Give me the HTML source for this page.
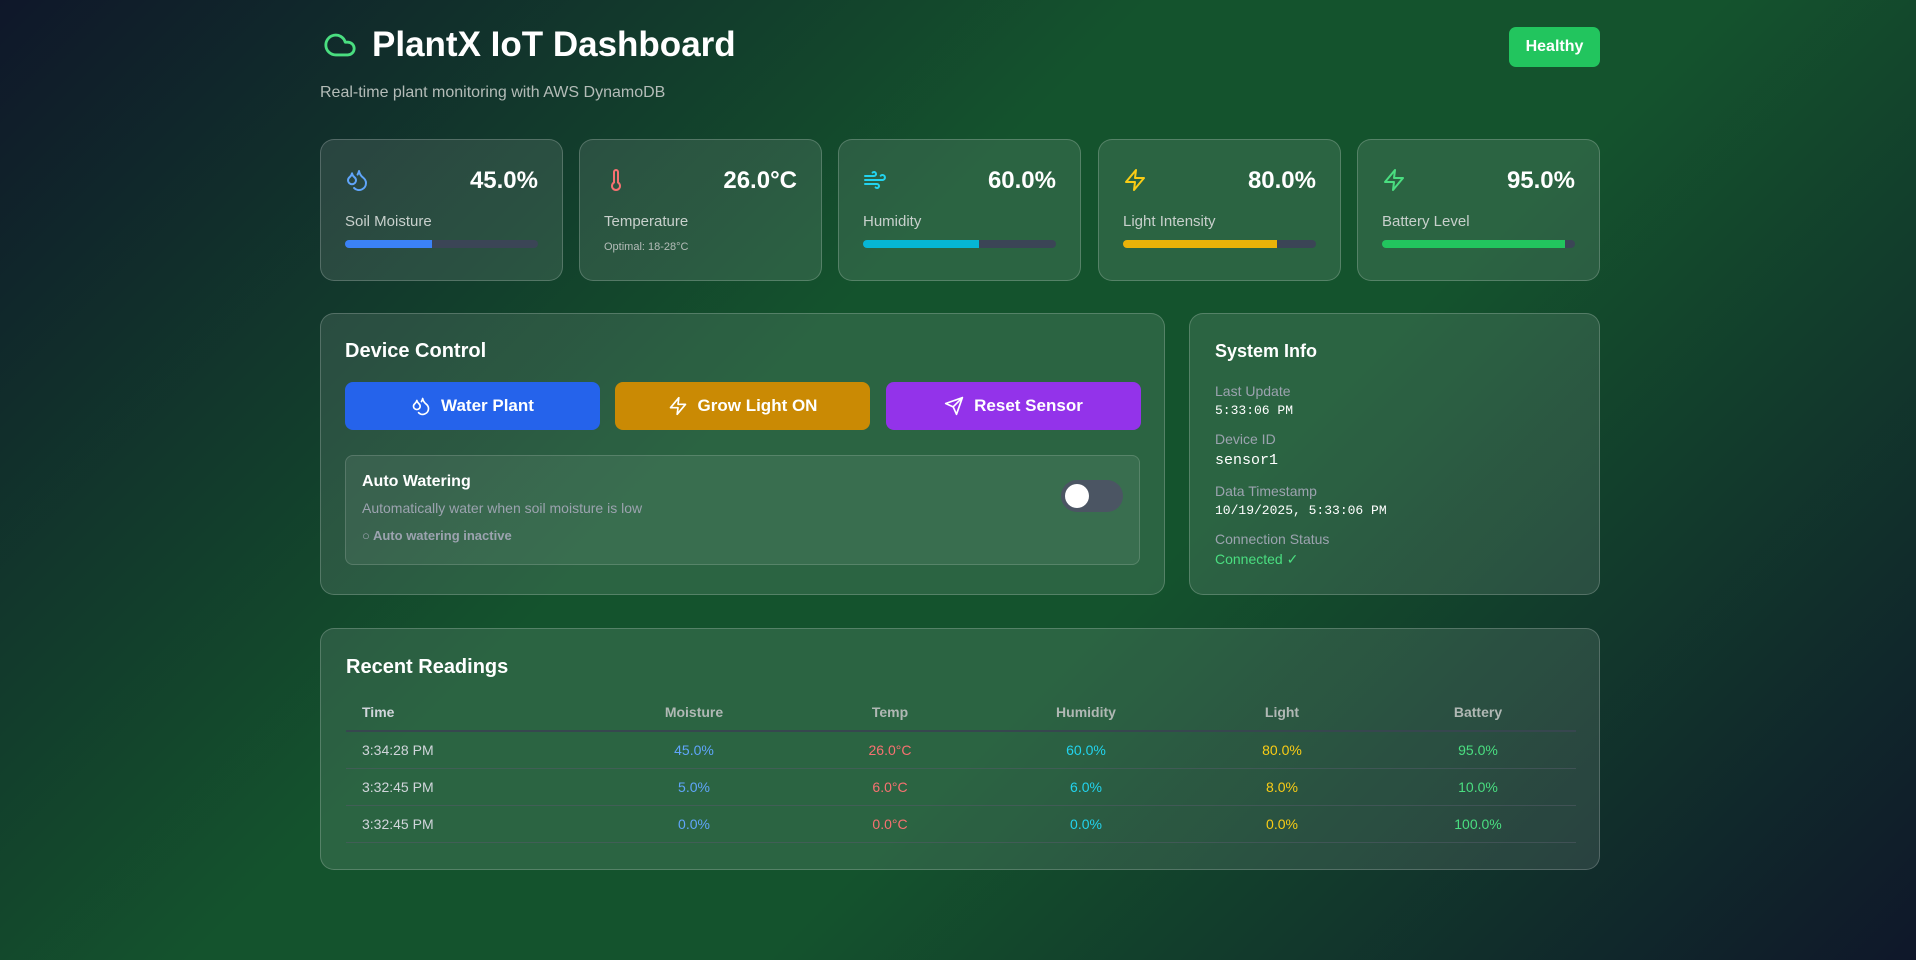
<!DOCTYPE html>
<html><head><meta charset="utf-8"><style>
*{box-sizing:border-box;margin:0;padding:0}
body{width:1916px;height:960px;overflow:hidden;font-family:"Liberation Sans",sans-serif;color:#fff;
background:linear-gradient(135deg,#0f172a 0%,#14532d 40%,#14532d 60%,#0f172a 100%);position:relative}
.a{position:absolute}
.card{position:absolute;border:1px solid rgba(255,255,255,0.2);border-radius:14px;background:rgba(255,255,255,0.1)}
.mc{top:139px;width:243px;height:142px}
.mc svg{position:absolute;left:24px;top:28px}
.mc .v{position:absolute;right:24px;top:27px;font-size:24px;font-weight:bold}
.mc .l{position:absolute;left:24px;top:73px;font-size:15px;color:#c8d0cc}
.bar{position:absolute;left:24px;right:24px;top:100px;height:8px;border-radius:4px;background:#3b4556;overflow:hidden}
.bar i{display:block;height:100%}
h2{font-size:20px;font-weight:bold;position:absolute}
.btn{position:absolute;top:382px;height:48px;width:255px;border-radius:8px;font-size:17px;font-weight:bold;display:flex;align-items:center;justify-content:center;gap:10px}
.lab{position:absolute;left:25px;font-size:14px;color:#9ca3af}
.val{position:absolute;left:25px;font-family:"Liberation Mono",monospace;font-size:13px;color:#fff}
table{position:absolute;left:25px;top:64px;width:1230px;border-collapse:collapse;font-size:14px;table-layout:fixed}
th{color:#b0b8b4;font-weight:bold;height:38px;border-bottom:2px solid #37474f;font-size:14px}
td{height:37px;border-bottom:1px solid rgba(80,90,100,0.6);text-align:center}
th:first-child,td:first-child{text-align:left;padding-left:16px;color:#d1d5db}
.c1{color:#60a5fa}.c2{color:#f87171}.c3{color:#22d3ee}.c4{color:#facc15}.c5{color:#4ade80}
</style></head><body>
<svg class="a" style="left:321px;top:28px" width="38" height="34" viewBox="0 0 24 24" fill="none" stroke="#4ade80" stroke-width="2" stroke-linecap="round" stroke-linejoin="round"><path d="M17.5 19H9a7 7 0 1 1 6.71-9h1.79a4.5 4.5 0 1 1 0 9Z"/></svg>
<div class="a" style="left:372px;top:25px;font-size:35px;font-weight:bold">PlantX IoT Dashboard</div>
<div class="a" style="left:320px;top:84px;font-size:16px;color:#b4bcb8">Real-time plant monitoring with AWS DynamoDB</div>
<div class="a" style="left:1509px;top:27px;width:91px;height:40px;border-radius:7px;background:#22c55e;font-size:16px;font-weight:bold;display:flex;align-items:center;justify-content:center">Healthy</div>

<div class="card mc" style="left:320px"><svg width="24" height="24" viewBox="0 0 24 24" fill="none" stroke="#60a5fa" stroke-width="2" stroke-linecap="round" stroke-linejoin="round"><path d="M7 16.3c2.2 0 4-1.830 4-4.05 0-1.16-.57-2.26-1.71-3.19S7.29 6.75 7 5.3c-.29 1.45-1.14 2.84-2.29 3.76S3 11.1 3 12.25c0 2.22 1.8 4.05 4 4.05z"/><path d="M12.56 6.6A10.97 10.97 0 0 0 14 3.02c.5 2.5 2 4.9 4 6.5s3 3.5 3 5.5a6.98 6.98 0 0 1-11.91 4.97"/></svg><div class="v">45.0%</div><div class="l">Soil Moisture</div><div class="bar"><i style="width:45%;background:#3b82f6"></i></div></div>
<div class="card mc" style="left:579px"><svg width="24" height="24" viewBox="0 0 24 24" fill="none" stroke="#f87171" stroke-width="2" stroke-linecap="round" stroke-linejoin="round"><path d="M14 4v10.54a4 4 0 1 1-4 0V4a2 2 0 0 1 4 0Z"/></svg><div class="v">26.0°C</div><div class="l">Temperature</div><div class="a" style="left:24px;top:101px;font-size:11px;color:#b4bcb8">Optimal: 18-28°C</div></div>
<div class="card mc" style="left:838px"><svg width="24" height="24" viewBox="0 0 24 24" fill="none" stroke="#22d3ee" stroke-width="2" stroke-linecap="round" stroke-linejoin="round"><path d="M17.7 7.7a2.5 2.5 0 1 1 1.8 4.3H2"/><path d="M9.6 4.6A2 2 0 1 1 11 8H2"/><path d="M12.6 19.4A2 2 0 1 0 14 16H2"/></svg><div class="v">60.0%</div><div class="l">Humidity</div><div class="bar"><i style="width:60%;background:#06b6d4"></i></div></div>
<div class="card mc" style="left:1098px"><svg width="24" height="24" viewBox="0 0 24 24" fill="none" stroke="#facc15" stroke-width="2" stroke-linecap="round" stroke-linejoin="round"><path d="M13 2 3 14h9l-1 8 10-12h-9l1-8z"/></svg><div class="v">80.0%</div><div class="l">Light Intensity</div><div class="bar"><i style="width:80%;background:#eab308"></i></div></div>
<div class="card mc" style="left:1357px"><svg width="24" height="24" viewBox="0 0 24 24" fill="none" stroke="#4ade80" stroke-width="2" stroke-linecap="round" stroke-linejoin="round"><path d="M13 2 3 14h9l-1 8 10-12h-9l1-8z"/></svg><div class="v">95.0%</div><div class="l">Battery Level</div><div class="bar"><i style="width:95%;background:#22c55e"></i></div></div>

<div class="card" style="left:320px;top:313px;width:845px;height:282px"></div>
<h2 style="left:345px;top:340px">Device Control</h2>
<div class="btn" style="left:345px;background:#2563eb"><svg width="20" height="20" viewBox="0 0 24 24" fill="none" stroke="#fff" stroke-width="2" stroke-linecap="round" stroke-linejoin="round"><path d="M7 16.3c2.2 0 4-1.83 4-4.05 0-1.16-.57-2.26-1.71-3.19S7.29 6.75 7 5.3c-.29 1.45-1.14 2.84-2.29 3.76S3 11.1 3 12.25c0 2.22 1.8 4.05 4 4.05z"/><path d="M12.56 6.6A10.970 10.97 0 0 0 14 3.02c.5 2.5 2 4.9 4 6.5s3 3.5 3 5.5a6.98 6.98 0 0 1-11.91 4.97"/></svg>Water Plant</div>
<div class="btn" style="left:615px;background:#ca8a04"><svg width="20" height="20" viewBox="0 0 24 24" fill="none" stroke="#fff" stroke-width="2" stroke-linecap="round" stroke-linejoin="round"><path d="M13 2 3 14h9l-1 8 10-12h-9l1-8z"/></svg>Grow Light ON</div>
<div class="btn" style="left:886px;background:#9333ea"><svg width="20" height="20" viewBox="0 0 24 24" fill="none" stroke="#fff" stroke-width="2" stroke-linecap="round" stroke-linejoin="round"><path d="m22 2-7 20-4-9-9-4Z"/><path d="M22 2 11 13"/></svg>Reset Sensor</div>
<div class="card" style="left:345px;top:455px;width:795px;height:110px;border-radius:8px;background:rgba(255,255,255,0.07);border-color:rgba(255,255,255,0.15)">
 <div class="a" style="left:16px;top:17px;font-size:16px;font-weight:bold">Auto Watering</div>
 <div class="a" style="left:16px;top:44px;font-size:14px;color:#9ca3af">Automatically water when soil moisture is low</div>
 <div class="a" style="left:16px;top:72px;font-size:13px;font-weight:bold;color:#9ca3af">○ Auto watering inactive</div>
 <div class="a" style="left:715px;top:24px;width:62px;height:32px;border-radius:16px;background:#4b5563"><div class="a" style="left:4px;top:4px;width:24px;height:24px;border-radius:50%;background:#fff"></div></div>
</div>

<div class="card" style="left:1189px;top:313px;width:411px;height:282px">
 <h2 style="left:25px;top:27px;font-size:18px">System Info</h2>
 <div class="lab" style="top:69px">Last Update</div><div class="val" style="top:89px">5:33:06 PM</div>
 <div class="lab" style="top:117px">Device ID</div><div class="val" style="top:138px;font-size:15px">sensor1</div>
 <div class="lab" style="top:169px">Data Timestamp</div><div class="val" style="top:189px">10/19/2025, 5:33:06 PM</div>
 <div class="lab" style="top:217px">Connection Status</div><div class="a" style="left:25px;top:237px;font-size:14px;color:#4ade80">Connected ✓</div>
</div>

<div class="card" style="left:320px;top:628px;width:1280px;height:242px">
 <h2 style="left:25px;top:27px">Recent Readings</h2>
 <table><colgroup><col style="width:250px"><col style="width:196px"><col style="width:196px"><col style="width:196px"><col style="width:196px"><col style="width:196px"></colgroup>
 <tr><th>Time</th><th>Moisture</th><th>Temp</th><th>Humidity</th><th>Light</th><th>Battery</th></tr>
 <tr><td>3:34:28 PM</td><td class="c1">45.0%</td><td class="c2">26.0°C</td><td class="c3">60.0%</td><td class="c4">80.0%</td><td class="c5">95.0%</td></tr>
 <tr><td>3:32:45 PM</td><td class="c1">5.0%</td><td class="c2">6.0°C</td><td class="c3">6.0%</td><td class="c4">8.0%</td><td class="c5">10.0%</td></tr>
 <tr><td>3:32:45 PM</td><td class="c1">0.0%</td><td class="c2">0.0°C</td><td class="c3">0.0%</td><td class="c4">0.0%</td><td class="c5">100.0%</td></tr>
 </table>
</div>
</body></html>
